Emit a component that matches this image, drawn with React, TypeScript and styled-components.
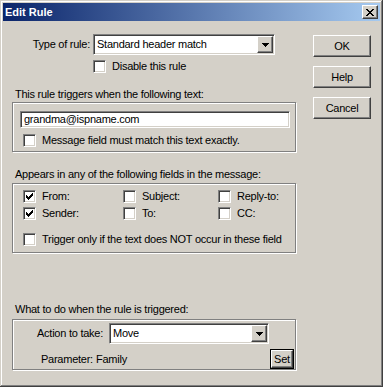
import React from "react";
import styled, { createGlobalStyle } from "styled-components";

const GlobalStyle = createGlobalStyle`
  html, body {
    margin: 0;
    padding: 0;
    background: #d4d0c8;
  }
  body {
    font-family: "Liberation Sans", Arial, sans-serif;
    font-size: 11px;
    letter-spacing: -0.25px;
    color: #000;
  }
  * {
    box-sizing: border-box;
  }
`

const Window = styled.div`
  width: 383px;
  height: 387px;
  padding: 3px;
  background: #d4d0c8;
  box-shadow: inset -1px -1px #404040, inset 1px 1px #d4d0c8,
    inset -2px -2px #808080, inset 2px 2px #fff;
  display: flex;
  flex-direction: column;
`

const TitleBar = styled.div`
  height: 18px;
  margin-bottom: 1px;
  padding: 0 2px;
  display: flex;
  align-items: center;
  justify-content: space-between;
  background: linear-gradient(to right, #0a246a, #a6caf0);
`

const Title = styled.span`
  color: #fff;
  font-weight: bold;
  letter-spacing: 0;
  line-height: 13px;
`

const raised = `
  background: #d4d0c8;
  border: 1px solid;
  border-color: #fff #404040 #404040 #fff;
  box-shadow: inset -1px -1px #808080, inset 1px 1px #d4d0c8;
`

const sunken = `
  border: 1px solid;
  border-color: #808080 #fff #fff #808080;
  box-shadow: inset 1px 1px #404040, inset -1px -1px #d4d0c8;
`

const CloseButton = styled.div`
  ${raised}
  width: 16px;
  height: 14px;
  display: flex;
  align-items: center;
  justify-content: center;
`

const Body = styled.div`
  display: flex;
`

const LeftColumn = styled.div`
  width: 284px;
  margin-left: 9px;
  display: flex;
  flex-direction: column;
`

const RightColumn = styled.div`
  width: 58px;
  margin: 13px 0 0 17px;
  display: flex;
  flex-direction: column;
  gap: 9px;
`

const PushButton = styled.div`
  ${raised}
  width: 58px;
  height: 22px;
  display: flex;
  align-items: center;
  justify-content: center;
  line-height: 13px;
`

const TypeRow = styled.div`
  margin-top: 12px;
  height: 21px;
  display: flex;
  align-items: center;
`

const RowLabel = styled.span<{ $width: number; $gap: number }>`
  width: ${(p) => p.$width}px;
  margin-right: ${(p) => p.$gap}px;
  text-align: right;
  line-height: 13px;
  white-space: nowrap;
`

const Combo = styled.div<{ $width: number }>`
  ${sunken}
  width: ${(p) => p.$width}px;
  height: 21px;
  padding: 1px;
  background: #fff;
  display: flex;
  align-items: center;
`

const ComboText = styled.span`
  flex: 1;
  padding-left: 2px;
  line-height: 13px;
  white-space: nowrap;
`

const DropButton = styled.div`
  ${raised}
  width: 16px;
  height: 17px;
  display: flex;
  align-items: center;
  justify-content: center;
`

const CheckRow = styled.label<{ $left?: number; $top?: number }>`
  display: flex;
  align-items: center;
  gap: 6px;
  height: 13px;
  margin-left: ${(p) => p.$left ?? 0}px;
  margin-top: ${(p) => p.$top ?? 0}px;
  line-height: 13px;
  white-space: nowrap;
`

const Box = styled.span`
  ${sunken}
  width: 13px;
  height: 13px;
  flex: none;
  background: #fff;
  display: flex;
  align-items: center;
  justify-content: center;
`

const SectionLabel = styled.div<{ $top: number; $bottom: number }>`
  margin: ${(p) => p.$top}px 0 ${(p) => p.$bottom}px 3px;
  line-height: 13px;
`

const GroupBox = styled.div<{ $height: number }>`
  height: ${(p) => p.$height}px;
  border: 1px solid #808080;
  box-shadow: inset 1px 1px #fff, 1px 1px #fff;
  display: flex;
  flex-direction: column;
`

const TextGroup = styled(GroupBox)`
  padding: 8px 0 0 7px;
`

const TextField = styled.div`
  ${sunken}
  width: 270px;
  height: 17px;
  padding: 0 3px;
  background: #fff;
  line-height: 13px;
  display: flex;
  align-items: center;
`

const FieldGroup = styled(GroupBox)`
  padding: 6px 0 0 10px;
`

const FieldGrid = styled.div`
  display: grid;
  grid-template-columns: 100px 95px auto;
  row-gap: 4px;
`

const ActionGroup = styled(GroupBox)`
  padding: 3px 1px 0 0;
`

const ActionRow = styled.div`
  height: 21px;
  display: flex;
  align-items: center;
`

const ParamRow = styled.div`
  margin-top: 5px;
  height: 20px;
  display: flex;
  justify-content: space-between;
`

const ParamText = styled.div`
  padding: 4px 0 0 28px;
  line-height: 13px;
  display: flex;
`

const ParamName = styled.span`
  width: 55px;
`

const SetButton = styled.div`
  width: 24px;
  height: 20px;
  border: 1px solid #000;
  display: flex;

  & > span {
    ${raised}
    flex: 1;
    display: flex;
    align-items: center;
    justify-content: center;
    line-height: 13px;
  }
`

// pixel icons, drawn row by row
const Pixels = ({ rows }: { rows: string[] }) => (
  <svg
    width={rows[0].length}
    height={rows.length}
    shapeRendering="crispEdges"
    style={{ display: "block" }}
  >
    {rows.map((r, y) =>
      r.split("").map((c, x) =>
        c === "#" ? <rect key={`${x}-${y}`} x={x} y={y} width={1} height={1} fill="#000" /> : null
      )
    )}
  </svg>
)

const closeX = ["##....##", ".##..##.", "..####..", "...##...", "..####..", ".##..##.", "##....##"]
const arrow = ["#######", ".#####.", "..###..", "...#..."]
const tick = ["......#", ".....##", "#...###", "##.###.", "#####..", ".###...", "..#...."]

const Check = ({ on, label, left, top }: { on?: boolean; label: string; left?: number; top?: number }) => (
  <CheckRow $left={left} $top={top}>
    <Box>{on && <Pixels rows={tick} />}</Box>
    {label}
  </CheckRow>
)

const ComboBox = ({ value, width }: { value: string; width: number }) => (
  <Combo $width={width}>
    <ComboText>{value}</ComboText>
    <DropButton>
      <Pixels rows={arrow} />
    </DropButton>
  </Combo>
)

export default function App() {
  return (
    <>
      <GlobalStyle />
      <Window>
        <TitleBar>
          <Title>Edit Rule</Title>
          <CloseButton>
            <Pixels rows={closeX} />
          </CloseButton>
        </TitleBar>
        <Body>
          <LeftColumn>
            <TypeRow>
              <RowLabel $width={78} $gap={3}>Type of rule:</RowLabel>
              <ComboBox value="Standard header match" width={182} />
            </TypeRow>
            <Check label="Disable this rule" left={81} top={5} />

            <SectionLabel $top={15} $bottom={1}>This rule triggers when the following text:</SectionLabel>
            <TextGroup $height={50}>
              <TextField>grandma@ispname.com</TextField>
              <Check label="Message field must match this text exactly." left={3} top={6} />
            </TextGroup>

            <SectionLabel $top={16} $bottom={2}>Appears in any of the following fields in the message:</SectionLabel>
            <FieldGroup $height={70}>
              <FieldGrid>
                <Check on label="From:" />
                <Check label="Subject:" />
                <Check label="Reply-to:" />
                <Check on label="Sender:" />
                <Check label="To:" />
                <Check label="CC:" />
              </FieldGrid>
              <Check label="Trigger only if the text does NOT occur in these field" top={13} />
            </FieldGroup>

            <SectionLabel $top={50} $bottom={3}>What to do when the rule is triggered:</SectionLabel>
            <ActionGroup $height={51}>
              <ActionRow>
                <RowLabel $width={90} $gap={6}>Action to take:</RowLabel>
                <ComboBox value="Move" width={160} />
              </ActionRow>
              <ParamRow>
                <ParamText>
                  <ParamName>Parameter:</ParamName>
                  <span>Family</span>
                </ParamText>
                <SetButton>
                  <span>Set</span>
                </SetButton>
              </ParamRow>
            </ActionGroup>
          </LeftColumn>
          <RightColumn>
            <PushButton>OK</PushButton>
            <PushButton>Help</PushButton>
            <PushButton>Cancel</PushButton>
          </RightColumn>
        </Body>
      </Window>
    </>
  );
}
